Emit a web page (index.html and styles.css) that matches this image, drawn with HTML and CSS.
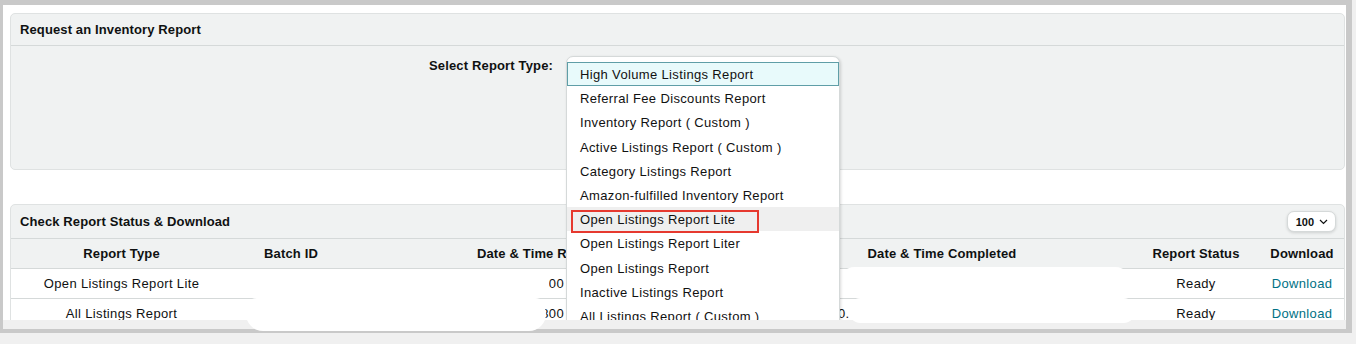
FILE: index.html
```html
<!DOCTYPE html>
<html lang="en">
<head>
  <meta charset="UTF-8">
  <meta name="viewport" content="width=device-width, initial-scale=1.0">
  <title>Inventory Reports</title>
  <link rel="stylesheet" href="styles.css">
</head>
<body>
  <div class="screen">
    <div class="viewport">
      <div class="panel">
        <div class="panel-header">Request an Inventory Report</div>
        <div class="panel-body">
          <div class="form-row">
            <label class="form-label">Select Report Type:</label>
            <div class="select-wrap">
              <ul class="menu">
                <li class="menu-item selected">High Volume Listings Report</li>
                <li class="menu-item">Referral Fee Discounts Report</li>
                <li class="menu-item">Inventory Report ( Custom )</li>
                <li class="menu-item">Active Listings Report ( Custom )</li>
                <li class="menu-item">Category Listings Report</li>
                <li class="menu-item">Amazon-fulfilled Inventory Report</li>
                <li class="menu-item hover">Open Listings Report Lite<span class="mark"></span></li>
                <li class="menu-item">Open Listings Report Liter</li>
                <li class="menu-item">Open Listings Report</li>
                <li class="menu-item">Inactive Listings Report</li>
                <li class="menu-item">All Listings Report ( Custom )</li>
              </ul>
            </div>
          </div>
        </div>
      </div>

      <div class="panel status-panel">
        <div class="panel-header status-header">
          <span>Check Report Status &amp; Download</span>
          <button class="page-size">100
            <svg width="9" height="6" viewBox="0 0 9 6"><polyline points="1,1 4.5,4.5 8,1" fill="none" stroke="#0f1111" stroke-width="1.2"/></svg>
          </button>
        </div>
        <table class="report-table">
          <colgroup>
            <col class="c-type">
            <col class="c-batch">
            <col class="c-req">
            <col class="c-done">
            <col class="c-status">
            <col class="c-dl">
          </colgroup>
          <thead>
            <tr>
              <th>Report Type</th>
              <th>Batch ID</th>
              <th>Date &amp; Time Requested</th>
              <th>Date &amp; Time Completed</th>
              <th>Report Status</th>
              <th>Download</th>
            </tr>
          </thead>
          <tbody>
            <tr>
              <td>Open Listings Report Lite</td>
              <td></td>
              <td class="req">2024 10:00</td>
              <td class="done"></td>
              <td>Ready</td>
              <td><a href="#" class="link">Download</a></td>
            </tr>
            <tr>
              <td>All Listings Report</td>
              <td></td>
              <td class="req">2024 -0800</td>
              <td class="done">0.</td>
              <td>Ready</td>
              <td><a href="#" class="link">Download</a></td>
            </tr>
          </tbody>
        </table>
      </div>
    </div>

    <!-- redaction marks -->
    <div class="blob blob-a"></div>
    <div class="blob blob-b"></div>
    <div class="blob blob-c"></div>
    <div class="blob blob-d"></div>
  </div>
</body>
</html>
```

FILE: styles.css
```css
body {
  margin: 0;
  background: #f0f0f0;
  font-family: "Liberation Sans", Arial, sans-serif;
  font-size: 13px;
  letter-spacing: 0.35px;
  color: #0f1111;
}

.screen {
  position: relative;
  width: 1343px;
  border-style: solid;
  border-color: #c9c9c9;
  border-width: 5px 6px 4px 3px;
  padding-bottom: 9px;
  background: #f0f0f0;
}

.viewport {
  position: relative;
  height: 315px;
  overflow: hidden;
  background: #fff;
  padding: 8px 0 0 7px;
  box-sizing: border-box;
}

.panel {
  width: 1335px;
  box-sizing: border-box;
  border: 1px solid #dfe2e2;
  border-radius: 5px;
  background: #f0f2f2;
}

.panel-header {
  height: 31px;
  line-height: 31px;
  padding-left: 9px;
  font-weight: bold;
  letter-spacing: 0.12px;
  border-bottom: 1px solid #d5d9d9;
}

.panel-body {
  height: 123px;
}

.form-row {
  display: flex;
  padding-top: 10px;
}

.form-label {
  width: 542px;
  text-align: right;
  font-weight: bold;
  letter-spacing: 0.15px;
  line-height: 20px;
}

.select-wrap {
  position: relative;
  margin-left: 13px;
}

.menu {
  position: absolute;
  top: 0;
  left: 0;
  z-index: 10;
  width: 274px;
  box-sizing: border-box;
  margin: 0;
  padding: 5px 0 0;
  list-style: none;
  background: #fff;
  border: 1px solid #d5d9d9;
  border-radius: 7px 7px 0 0;
  box-shadow: 1px 1px 3px rgba(0, 0, 0, 0.15);
}

.menu-item {
  position: relative;
  height: 24.2px;
  line-height: 25px;
  padding-left: 13px;
  white-space: nowrap;
  color: #111;
}

.menu-item.selected {
  box-sizing: border-box;
  line-height: 23px;
  padding-left: 12px;
  background: #e8fafb;
  border: 1px solid #5f9ea7;
}

.menu-item.hover {
  background: #efefef;
}

.mark {
  position: absolute;
  left: 4px;
  top: 3px;
  width: 184px;
  height: 19px;
  border: 2px solid #e6392f;
}

.status-panel {
  margin-top: 34px;
}

.status-header {
  height: 33px;
  line-height: 33px;
  display: flex;
  justify-content: space-between;
  align-items: center;
  padding-right: 8px;
}

.page-size {
  display: flex;
  align-items: center;
  gap: 5px;
  height: 21px;
  padding: 0 7px 0 8px;
  font-family: inherit;
  font-size: 11px;
  font-weight: bold;
  letter-spacing: 0;
  color: #0f1111;
  background: #fff;
  border: 1px solid #d5d9d9;
  border-radius: 7px;
  box-shadow: 0 1px 3px rgba(15, 17, 17, 0.15);
}

.report-table {
  width: 1333px;
  table-layout: fixed;
  border-collapse: collapse;
}

.c-type { width: 221px; }
.c-batch { width: 118px; }
.c-req { width: 402px; }
.c-done { width: 380px; }
.c-status { width: 128px; }
.c-dl { width: 84px; }

.report-table th,
.report-table td {
  height: 29px;
  padding: 0;
  text-align: center;
  white-space: nowrap;
  overflow: hidden;
  border-bottom: 1px solid #d5d9d9;
}

.report-table th {
  font-weight: bold;
  letter-spacing: 0.15px;
  background: #f0f2f2;
}

.report-table td {
  background: #fff;
}

.report-table td.req {
  text-align: right;
  padding-right: 188px;
}

.report-table td.done {
  text-align: left;
  padding-left: 86px;
}

.link {
  color: #007185;
  text-decoration: none;
}

.blob {
  position: absolute;
  background: #fff;
  border-radius: 18px;
}

.blob-a { left: 240px; top: 265px; width: 306px; height: 29px; }
.blob-b { left: 243px; top: 292px; width: 300px; height: 34px; }
.blob-c { left: 836px; top: 262px; width: 292px; height: 31px; }
.blob-d { left: 845px; top: 293px; width: 288px; height: 25px; }
```
